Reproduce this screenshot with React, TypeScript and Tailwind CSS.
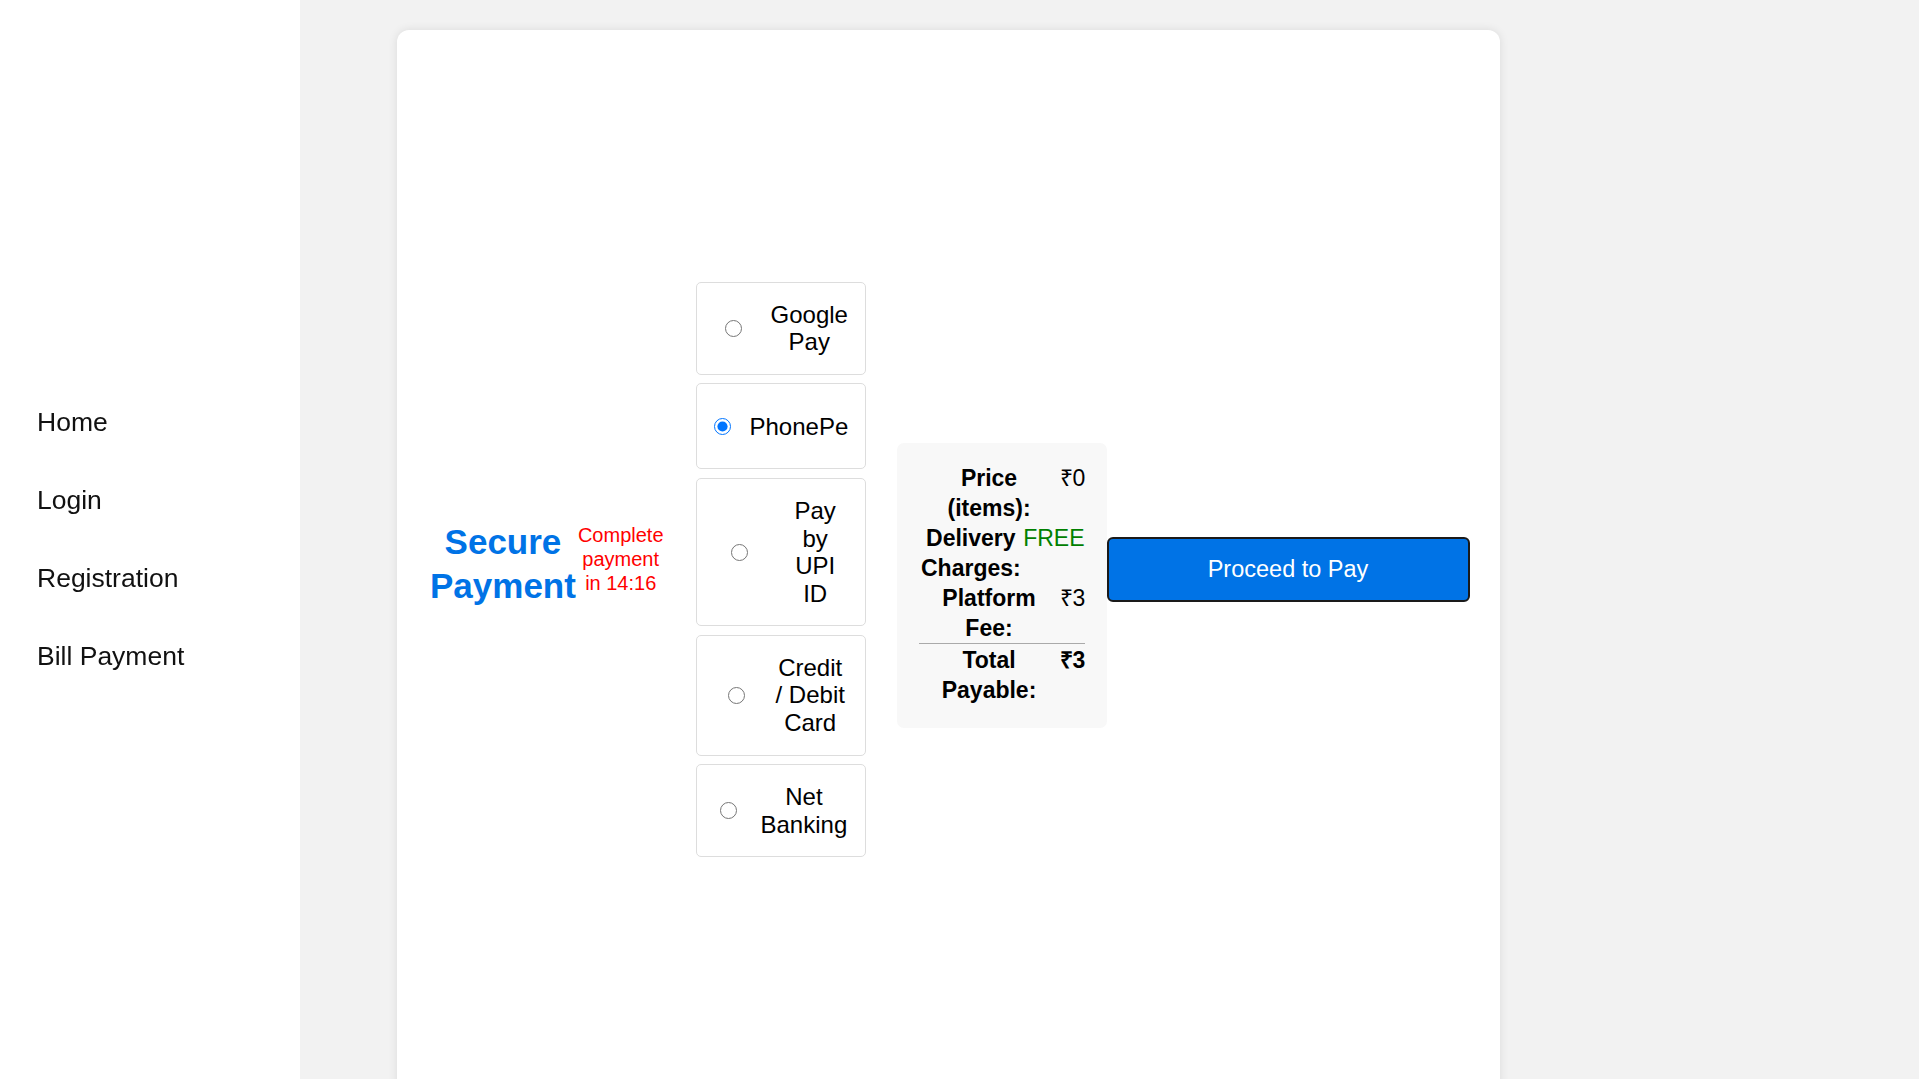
import React from 'react';

const navLinks = ['Home', 'Login', 'Registration', 'Bill Payment'];

type PayOption = {
  id: string;
  lines: string[];
  radioMl: string;
  textMl: string;
  minH?: string;
  checked?: boolean;
};

// offsets measured against the reference; each label wraps differently
const payOptions: PayOption[] = [
  { id: 'gpay', lines: ['Google', 'Pay'], radioMl: 'ml-[28px]', textMl: 'ml-[29px]' },
  {
    id: 'phonepe',
    lines: ['PhonePe'],
    radioMl: 'ml-[17px]',
    textMl: 'ml-[19px]',
    minH: 'min-h-[86px]',
    checked: true,
  },
  { id: 'upi', lines: ['Pay', 'by', 'UPI', 'ID'], radioMl: 'ml-[34px]', textMl: 'ml-[47px]' },
  { id: 'card', lines: ['Credit', '/ Debit', 'Card'], radioMl: 'ml-[31px]', textMl: 'ml-[31px]' },
  { id: 'netbanking', lines: ['Net', 'Banking'], radioMl: 'ml-[23px]', textMl: 'ml-[24px]' },
];

const Sidebar = () => (
  <aside className="w-[300px] shrink-0 bg-white">
    <nav className="sticky top-0 flex h-screen flex-col justify-center gap-[47.5px] pl-[37px]">
      {navLinks.map((link) => (
        <a
          key={link}
          href="#"
          className="text-[26.5px] leading-[30.5px] text-[#111111]"
        >
          {link}
        </a>
      ))}
    </nav>
  </aside>
);

const PaymentOptions = () => (
  <div className="ml-[32px] flex w-[170px] shrink-0 flex-col gap-[8.5px]">
    {payOptions.map((opt) => (
      <label
        key={opt.id}
        className={`flex items-center rounded-[5px] border border-[#dddddd] bg-white py-[18px] ${opt.minH ?? ''}`}
      >
        <input
          type="radio"
          name="payment"
          defaultChecked={opt.checked}
          className={`m-0 h-[17px] w-[17px] shrink-0 ${opt.radioMl}`}
        />
        <span
          className={`whitespace-nowrap text-center text-[24px] leading-[27.6px] text-black ${opt.textMl}`}
        >
          {opt.lines.map((line) => (
            <span key={line} className="block">
              {line}
            </span>
          ))}
        </span>
      </label>
    ))}
  </div>
);

const SummaryRow = ({
  label,
  value,
  valueClass,
  className = '',
}: {
  label: string[];
  value: string;
  valueClass: string;
  className?: string;
}) => (
  <div className={`flex items-start ${className}`}>
    <div className="flex-1 text-center font-bold">
      {label.map((l) => (
        <span key={l} className="block whitespace-nowrap">
          {l}
        </span>
      ))}
    </div>
    <div className={`whitespace-nowrap text-right ${valueClass}`}>{value}</div>
  </div>
);

const PriceSummary = () => (
  <div className="ml-[31px] mt-[32px] w-[210px] shrink-0 rounded-[7px] bg-[#f8f8f8] px-[22px] pb-[23px] pt-[20px] text-[23px] leading-[30px] text-black">
    <SummaryRow label={['Price', '(items):']} value="₹0" valueClass="w-[25px]" />
    <SummaryRow
      label={['Delivery', 'Charges:']}
      value="FREE"
      valueClass="text-[#008000]"
    />
    <SummaryRow label={['Platform', 'Fee:']} value="₹3" valueClass="w-[25px]" />
    <SummaryRow
      label={['Total', 'Payable:']}
      value="₹3"
      valueClass="w-[25px] font-bold"
      className="border-t border-[#aaaaaa] pt-[1px]"
    />
  </div>
);

export default function App() {
  return (
    <div className="h-screen overflow-y-scroll [scrollbar-color:#8a8a8a_#fafafa] [scrollbar-width:auto]">
      <div className="flex min-h-screen font-['Liberation_Sans',Arial,sans-serif]">
        <Sidebar />
        <main className="flex-1 bg-[#f2f2f2]">
          <div className="my-[30px] ml-[97px] flex min-h-screen w-[1103px] items-center rounded-[12px] bg-white p-[30px] shadow-[0_0_10px_rgba(0,0,0,0.1)]">
            <div className="mb-[12px] ml-[3px] flex shrink-0 items-start gap-[2px]">
              <h1 className="text-center text-[35px] font-bold leading-[44px] text-[#0073e6]">
                <span className="block">Secure</span>
                <span className="block">Payment</span>
              </h1>
              <p className="mt-[3px] text-center text-[20px] leading-[24px] text-[#ff0000]">
                <span className="block">Complete</span>
                <span className="block">payment</span>
                <span className="block">in 14:16</span>
              </p>
            </div>

            <PaymentOptions />

            <PriceSummary />

            <button
              type="button"
              className="h-[65px] w-[363px] shrink-0 rounded-[6px] border-2 border-[#1a1a1a] bg-[#0073e6] text-[23.5px] text-white"
            >
              Proceed to Pay
            </button>
          </div>
        </main>
      </div>
    </div>
  );
}
